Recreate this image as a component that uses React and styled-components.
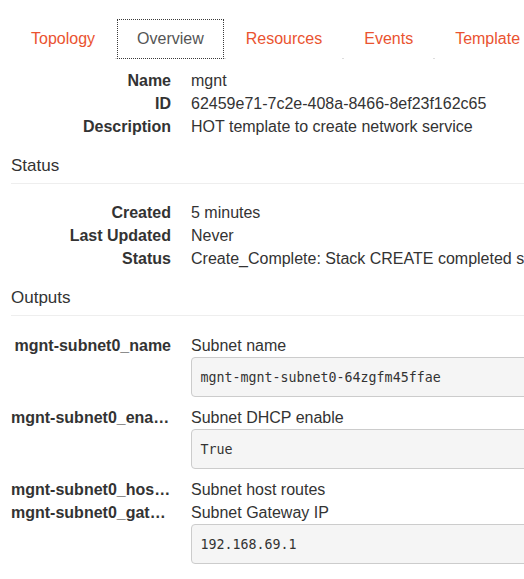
import React from "react";
import styled, { createGlobalStyle } from "styled-components";

const GlobalStyle = createGlobalStyle`
  html, body {
    margin: 0;
    padding: 0;
    background: #fff;
    overflow: hidden;
  }
  body {
    font-family: "Liberation Sans", Arial, sans-serif;
    font-size: 16px;
    line-height: 23px;
    color: #333;
  }
`;

const tabs = ["Topology", "Overview", "Resources", "Events", "Template"];

const overview = [
  { label: "Name", value: "mgnt" },
  { label: "ID", value: "62459e71-7c2e-408a-8466-8ef23f162c65" },
  { label: "Description", value: "HOT template to create network service" },
];

const status = [
  { label: "Created", value: "5 minutes" },
  { label: "Last Updated", value: "Never" },
  {
    label: "Status",
    value: "Create_Complete: Stack CREATE completed successfully",
  },
];

const outputs = [
  {
    key: "mgnt-subnet0_name",
    description: "Subnet name",
    value: "mgnt-mgnt-subnet0-64zgfm45ffae",
  },
  {
    key: "mgnt-subnet0_enable_dhcp",
    description: "Subnet DHCP enable",
    value: "True",
  },
  { key: "mgnt-subnet0_host_routes", description: "Subnet host routes" },
  {
    key: "mgnt-subnet0_gateway_ip",
    description: "Subnet Gateway IP",
    value: "192.168.69.1",
  },
];

const App = () => {
  return (
    <>
      <GlobalStyle />
      <Page>
        <TabList>
          {tabs.map((tab) => (
            <TabItem key={tab}>
              <TabLink $active={tab === "Overview"}>{tab}</TabLink>
            </TabItem>
          ))}
        </TabList>

        <DetailList $top={10}>
          {overview.map((item) => (
            <DetailRow key={item.label}>
              <Term>{item.label}</Term>
              <Value>{item.value}</Value>
            </DetailRow>
          ))}
        </DetailList>

        <SectionTitle>Status</SectionTitle>
        <DetailList $top={17}>
          {status.map((item) => (
            <DetailRow key={item.label}>
              <Term>{item.label}</Term>
              <Value>{item.value}</Value>
            </DetailRow>
          ))}
        </DetailList>

        <SectionTitle>Outputs</SectionTitle>
        <DetailList $top={18}>
          {outputs.map((item) => (
            <DetailRow key={item.key}>
              <Term title={item.key}>{item.key}</Term>
              <Value>
                {item.description}
                {item.value && <Code>{item.value}</Code>}
              </Value>
            </DetailRow>
          ))}
        </DetailList>
      </Page>
    </>
  );
};

const Page = styled.div`
  width: 780px;
  padding: 19px 0 0 11px;
`;

const TabList = styled.ul`
  display: flex;
  list-style: none;
  margin: 0;
  padding: 0;
  border-bottom: 1px solid #ddd;
`;

const TabItem = styled.li`
  margin: 0 2px -1px 0;
`;

const TabLink = styled.a`
  display: block;
  padding: 7px 19px 8px;
  line-height: 23px;
  border: 1px ${(props) => (props.$active ? "dotted #3a3a3a" : "solid transparent")};
  background: #fff;
  color: ${(props) => (props.$active ? "#555" : "#ea5330")};
  cursor: pointer;
`;

const DetailList = styled.dl`
  display: flex;
  flex-direction: column;
  margin: ${(props) => props.$top}px 0 0;
`;

const DetailRow = styled.div`
  display: grid;
  grid-template-columns: 160px 1fr;
  column-gap: 20px;
`;

const Term = styled.dt`
  font-weight: bold;
  text-align: right;
  white-space: nowrap;
  overflow: hidden;
  text-overflow: ellipsis;
`;

const Value = styled.dd`
  margin: 0;
  white-space: nowrap;
`;

const Code = styled.pre`
  margin: 0 0 9px;
  padding: 9.5px 8.5px;
  font-family: "DejaVu Sans Mono", "Liberation Mono", monospace;
  font-size: 13.3px;
  line-height: 19px;
  color: #333;
  background: #f5f5f5;
  border: 1px solid #ccc;
  border-radius: 4px;
`;

const SectionTitle = styled.h4`
  margin: 16px 0 0;
  padding-bottom: 6px;
  font-size: 17px;
  line-height: 23px;
  font-weight: normal;
  color: #333;
  border-bottom: 1px solid #eee;
`;

export default App;
